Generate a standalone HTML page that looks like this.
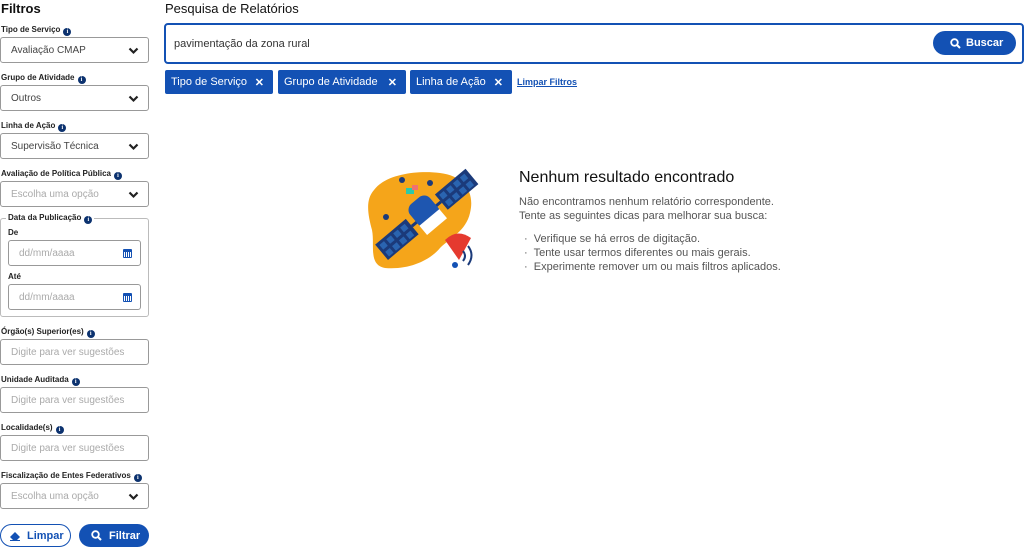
<!DOCTYPE html>
<html><head><meta charset="utf-8"><style>
*{box-sizing:border-box;margin:0;padding:0}
body{width:1024px;height:547px;overflow:hidden;background:#fff;font-family:"Liberation Sans",sans-serif;color:#333;position:relative}
.a{position:absolute}
.lbl{position:absolute;left:1px;font-size:8px;font-weight:bold;color:#222;white-space:nowrap;line-height:10px}
.i{display:inline-block;width:8px;height:8px;border-radius:50%;background:#0c326f;color:#fff;font-size:6px;line-height:8px;text-align:center;vertical-align:-1px;margin-left:3px;font-family:"Liberation Serif",serif;font-weight:bold}
.box{position:absolute;left:0;width:149px;height:26px;border:1px solid #999;border-radius:3px;font-size:10px;display:flex;align-items:center;padding-left:10px;color:#444}
.ph{color:#aaa}
.chev{position:absolute;right:9px;top:9px}
.chip{position:absolute;top:70px;height:24px;background:#1351b4;color:#fff;font-size:11px;display:flex;align-items:center;padding-left:6px;border-radius:2px}
.chip b{position:absolute;right:9px;font-size:11px}
.cal{position:absolute;right:8px;top:8px;width:9px;height:9px;background:#1351b4;border-radius:1px}
.cal:after{content:"";position:absolute;left:1px;top:3px;width:7px;height:5px;background:repeating-linear-gradient(90deg,#fff 0 1px,transparent 1px 2px)}
.btn{position:absolute;top:524px;height:23px;border-radius:12px;font-size:11px;font-weight:bold;display:flex;align-items:center}
ul{list-style:none}
</style></head><body>
<div class="a" style="left:1px;top:1px;font-size:13px;font-weight:bold;color:#111">Filtros</div>

<div class="lbl" style="top:25px">Tipo de Serviço<span class="i">i</span></div>
<div class="box" style="top:37px">Avaliação CMAP<svg class="chev" width="11" height="8" viewBox="0 0 11 8"><path d="M1.5 1.5l4 4 4-4" stroke="#222" stroke-width="2.2" fill="none"/></svg></div>
<div class="lbl" style="top:73px">Grupo de Atividade<span class="i">i</span></div>
<div class="box" style="top:85px">Outros<svg class="chev" width="11" height="8" viewBox="0 0 11 8"><path d="M1.5 1.5l4 4 4-4" stroke="#222" stroke-width="2.2" fill="none"/></svg></div>
<div class="lbl" style="top:121px">Linha de Ação<span class="i">i</span></div>
<div class="box" style="top:133px">Supervisão Técnica<svg class="chev" width="11" height="8" viewBox="0 0 11 8"><path d="M1.5 1.5l4 4 4-4" stroke="#222" stroke-width="2.2" fill="none"/></svg></div>
<div class="lbl" style="top:169px">Avaliação de Política Pública<span class="i">i</span></div>
<div class="box ph" style="top:181px">Escolha uma opção<svg class="chev" width="11" height="8" viewBox="0 0 11 8"><path d="M1.5 1.5l4 4 4-4" stroke="#222" stroke-width="2.2" fill="none"/></svg></div>

<div class="a" style="left:0;top:218px;width:149px;height:99px;border:1px solid #bbb;border-radius:3px"></div>
<div class="lbl" style="top:213px;left:6px;background:#fff;padding:0 2px">Data da Publicação<span class="i">i</span></div>
<div class="lbl" style="top:228px;left:8px">De</div>
<div class="box ph" style="top:240px;left:8px;width:133px">dd/mm/aaaa<span class="cal"></span></div>
<div class="lbl" style="top:272px;left:8px">Até</div>
<div class="box ph" style="top:284px;left:8px;width:133px">dd/mm/aaaa<span class="cal"></span></div>

<div class="lbl" style="top:327px">Órgão(s) Superior(es)<span class="i">i</span></div>
<div class="box ph" style="top:339px">Digite para ver sugestões</div>
<div class="lbl" style="top:375px">Unidade Auditada<span class="i">i</span></div>
<div class="box ph" style="top:387px">Digite para ver sugestões</div>
<div class="lbl" style="top:423px">Localidade(s)<span class="i">i</span></div>
<div class="box ph" style="top:435px">Digite para ver sugestões</div>
<div class="lbl" style="top:471px">Fiscalização de Entes Federativos<span class="i">i</span></div>
<div class="box ph" style="top:483px">Escolha uma opção<svg class="chev" width="11" height="8" viewBox="0 0 11 8"><path d="M1.5 1.5l4 4 4-4" stroke="#222" stroke-width="2.2" fill="none"/></svg></div>

<div class="btn" style="left:0;width:71px;border:1px solid #1351b4;color:#1351b4;padding-left:26px">Limpar
<svg class="a" style="left:8px;top:6px" width="12" height="10" viewBox="0 0 12 10"><path d="M1 6l5-5 5 5-3 3H4z" fill="#1351b4"/><path d="M1 9.5h10" stroke="#1351b4"/></svg></div>
<div class="btn" style="left:79px;width:70px;background:#1351b4;color:#fff;padding-left:30px">Filtrar
<svg class="a" style="left:12px;top:6px" width="11" height="11" viewBox="0 0 11 11"><circle cx="4.5" cy="4.5" r="3.3" stroke="#fff" stroke-width="1.8" fill="none"/><path d="M7 7l3 3" stroke="#fff" stroke-width="2"/></svg></div>

<div class="a" style="left:165px;top:1px;font-size:13px;color:#111">Pesquisa de Relatórios</div>
<div class="a" style="left:164px;top:23px;width:860px;height:41px;border:2px solid #1351b4;border-radius:4px;font-size:11px;display:flex;align-items:center;padding-left:8px;color:#333">pavimentação da zona rural</div>
<div class="btn" style="left:933px;top:31px;width:83px;height:24px;background:#1351b4;color:#fff;padding-left:33px">Buscar
<svg class="a" style="left:17px;top:7px" width="11" height="11" viewBox="0 0 11 11"><circle cx="4.5" cy="4.5" r="3.3" stroke="#fff" stroke-width="1.8" fill="none"/><path d="M7 7l3 3" stroke="#fff" stroke-width="2"/></svg></div>

<div class="chip" style="left:165px;width:108px">Tipo de Serviço<b>✕</b></div>
<div class="chip" style="left:278px;width:128px">Grupo de Atividade<b>✕</b></div>
<div class="chip" style="left:410px;width:102px">Linha de Ação<b>✕</b></div>
<div class="a" style="left:517px;top:77px;font-size:9px;font-weight:bold;color:#1351b4;text-decoration:underline">Limpar Filtros</div>

<svg class="a" style="left:360px;top:155px" width="130" height="125" viewBox="0 0 130 125">
<path d="M14 35C25 20 55 15 80 18c25 3 35 20 30 40-4 18-20 25-30 35-10 12-30 22-55 20C8 110 15 90 12 75 8 60 5 45 14 35z" fill="#f5a51a"/>
<circle cx="42" cy="25" r="3" fill="#1b3a7a"/><circle cx="70" cy="28" r="3" fill="#1b3a7a"/><circle cx="26" cy="62" r="3" fill="#1b3a7a"/><circle cx="95" cy="110" r="3" fill="#1351b4"/><circle cx="115" cy="60" r="3" fill="#fff"/>
<path d="M85 85q12-12 26-2l-12 22z" fill="#e53a2f"/>
<path d="M103 96q4 5 0 10M108 91q7 9 0 19" stroke="#1b3a7a" stroke-width="2" fill="none"/>
<g transform="rotate(-40 66 60)">
<rect x="8" y="50" width="40" height="20" fill="#1b3a7a"/>
<rect x="86" y="50" width="40" height="20" fill="#1b3a7a"/>
<g fill="#2a64b0"><rect x="11" y="53" width="6" height="6"/><rect x="20" y="53" width="6" height="6"/><rect x="29" y="53" width="6" height="6"/><rect x="38" y="53" width="6" height="6"/><rect x="11" y="62" width="6" height="6"/><rect x="20" y="62" width="6" height="6"/><rect x="29" y="62" width="6" height="6"/><rect x="38" y="62" width="6" height="6"/>
<rect x="89" y="53" width="6" height="6"/><rect x="98" y="53" width="6" height="6"/><rect x="107" y="53" width="6" height="6"/><rect x="116" y="53" width="6" height="6"/><rect x="89" y="62" width="6" height="6"/><rect x="98" y="62" width="6" height="6"/><rect x="107" y="62" width="6" height="6"/><rect x="116" y="62" width="6" height="6"/></g>
<rect x="48" y="58" width="38" height="3" fill="#1b3a7a"/>
<rect x="54" y="42" width="26" height="28" rx="8" fill="#1e56b0"/>
<rect x="54" y="64" width="26" height="12" fill="#fff"/>
</g>
<rect x="46" y="33" width="8" height="6" fill="#2cc9a8"/><rect x="52" y="30" width="6" height="5" fill="#f07070"/>
</svg>

<div class="a" style="left:519px;top:169px;font-size:16px;color:#111">Nenhum resultado encontrado</div>
<div class="a" style="left:519px;top:195px;font-size:11px;line-height:14px;color:#555">Não encontramos nenhum relatório correspondente.<br>Tente as seguintes dicas para melhorar sua busca:</div>
<ul class="a" style="left:524px;top:232px;font-size:11px;line-height:14px;color:#555">
<li>·&nbsp; Verifique se há erros de digitação.</li>
<li>·&nbsp; Tente usar termos diferentes ou mais gerais.</li>
<li>·&nbsp; Experimente remover um ou mais filtros aplicados.</li>
</ul>
</body></html>
